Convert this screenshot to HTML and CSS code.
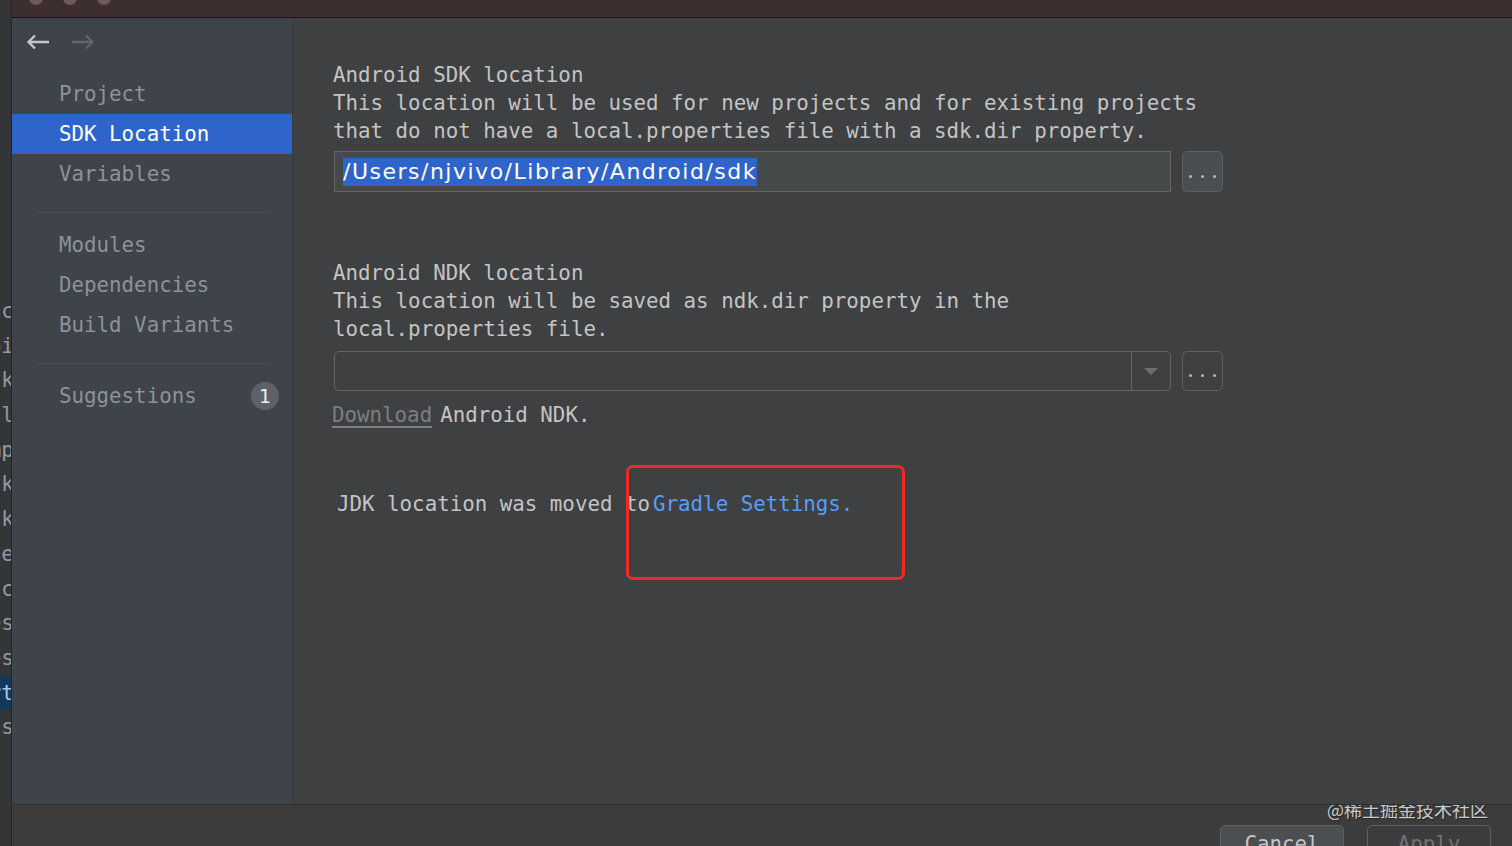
FILE: index.html
```html
<!DOCTYPE html>
<html>
<head>
<meta charset="utf-8">
<link rel="stylesheet" href="styles.css">
</head>
<body>
<div class="screen">
  <div class="editor-strip">
    <div class="code-line">func</div>
    <div class="code-line">Compi</div>
    <div class="code-line">track</div>
    <div class="code-line">ral_</div>
    <div class="code-line">comp</div>
    <div class="code-line">stack</div>
    <div class="code-line">stack</div>
    <div class="code-line">file</div>
    <div class="code-line">c</div>
    <div class="code-line">es</div>
    <div class="code-line">es</div>
    <div class="code-line current">rt</div>
    <div class="code-line">s)</div>
  </div>
  <div class="dialog">
    <div class="titlebar">
      <span class="light"></span><span class="light"></span><span class="light"></span>
    </div>
    <div class="dialog-body">
      <aside class="sidebar">
        <div class="nav">
          <svg class="arrow back" width="24" height="16" viewBox="0 0 24 16"><path d="M23 8H3M9 1.5L2.5 8L9 14.5" fill="none" stroke="currentColor" stroke-width="2.4"/></svg>
          <svg class="arrow fwd" width="24" height="16" viewBox="0 0 24 16"><path d="M1 8H21M15 1.5L21.5 8L15 14.5" fill="none" stroke="currentColor" stroke-width="2.4"/></svg>
        </div>
        <ul class="menu">
          <li class="item">Project</li>
          <li class="item selected">SDK Location</li>
          <li class="item">Variables</li>
        </ul>
        <div class="sep"></div>
        <ul class="menu">
          <li class="item">Modules</li>
          <li class="item">Dependencies</li>
          <li class="item">Build Variants</li>
        </ul>
        <div class="sep"></div>
        <ul class="menu">
          <li class="item with-badge"><span>Suggestions</span><span class="badge">1</span></li>
        </ul>
      </aside>
      <main class="content">
        <section class="block">
          <p class="text">Android SDK location</p>
          <p class="text">This location will be used for new projects and for existing projects</p>
          <p class="text">that do not have a local.properties file with a sdk.dir property.</p>
          <div class="field-row sdk-row">
            <div class="textfield"><span class="sel">/Users/njvivo/Library/Android/sdk</span></div>
            <div class="browse filled"><i></i><i></i><i></i></div>
          </div>
        </section>
        <section class="block ndk">
          <p class="text">Android NDK location</p>
          <p class="text">This location will be saved as ndk.dir property in the</p>
          <p class="text">local.properties file.</p>
          <div class="field-row ndk-row">
            <div class="combo">
              <div class="combo-input"></div>
              <div class="combo-btn"><span class="tri"></span></div>
            </div>
            <div class="browse"><i></i><i></i><i></i></div>
          </div>
          <p class="text download"><span class="dl-link">Download</span><span class="dl-rest">Android NDK.</span></p>
        </section>
        <p class="text jdk">JDK location was moved to<span class="link">Gradle Settings.</span></p>
        <div class="annot"></div>
      </main>
    </div>
    <div class="footer">
      <div class="watermark">@稀土掘金技术社区</div>
      <div class="buttons">
        <div class="btn primary">Cancel</div>
        <div class="btn dim">Apply</div>
      </div>
    </div>
  </div>
</div>
</body>
</html>
```

FILE: styles.css
```css
* { box-sizing: border-box; }
html, body { margin: 0; padding: 0; }
body {
  width: 1512px;
  height: 846px;
  overflow: hidden;
  background: #2f3133;
  font-family: "DejaVu Sans Mono", "Liberation Mono", monospace;
}
.screen {
  display: flex;
  width: 1512px;
  height: 846px;
}
.editor-strip {
  width: 12px;
  flex: none;
  background: #333537;
  border-right: 1px solid #242526;
  padding-top: 294px;
  overflow: hidden;
}
.code-line {
  height: 34.7px;
  line-height: 34.7px;
  font-size: 21px;
  color: #8f9aa6;
  text-align: right;
  white-space: nowrap;
  direction: rtl;
  overflow: hidden;
  margin-right: -3px;
}
.code-line.current {
  background: #12395a;
  color: #a9c5e0;
}
.dialog {
  flex: 1;
  display: flex;
  flex-direction: column;
  min-width: 0;
}
.titlebar {
  height: 18px;
  flex: none;
  background: #3d2e2f;
  border-bottom: 1px solid #1c1415;
  display: flex;
  gap: 20px;
  padding-left: 17px;
  align-items: flex-start;
  overflow: hidden;
}
.light {
  width: 14px;
  height: 14px;
  border-radius: 50%;
  background: #6a5a5b;
  margin-top: -9px;
}
.dialog-body {
  flex: 1;
  display: flex;
  min-height: 0;
}
.sidebar {
  width: 281px;
  flex: none;
  background: #3f434a;
  border-right: 1px solid #36393e;
}
.nav {
  height: 47px;
  display: flex;
  align-items: center;
  gap: 21px;
  padding-left: 14px;
}
.arrow.back { color: #c2c6ca; }
.arrow.fwd { color: #60666d; }
.menu {
  list-style: none;
  margin: 0;
  padding: 0;
}
.nav + .menu { margin-top: 9px; }
.item {
  height: 40px;
  line-height: 40px;
  padding-left: 47px;
  font-size: 20.8px;
  color: #8e9297;
}
.item.selected {
  background: #2f65ca;
  color: #ffffff;
}
.with-badge {
  display: flex;
  justify-content: space-between;
  align-items: center;
  padding-right: 13px;
}
.badge {
  width: 28px;
  height: 28px;
  border-radius: 50%;
  background: #5c616a;
  color: #f0f0f0;
  font-family: "DejaVu Sans", sans-serif;
  font-size: 19px;
  line-height: 28px;
  text-align: center;
}
.sep {
  height: 1px;
  background: #4c5058;
  margin: 18px 22px 12px 24px;
}
.content {
  flex: 1;
  background: #3e4042;
  padding: 43px 0 0 40px;
  position: relative;
}
.text {
  margin: 0;
  font-size: 20.8px;
  line-height: 28px;
  color: #c4c4c4;
  white-space: nowrap;
}
.field-row {
  display: flex;
  gap: 11px;
  margin-left: 1px;
}
.sdk-row { margin-top: 6px; height: 41px; }
.textfield {
  width: 837px;
  height: 41px;
  background: #45494a;
  border: 1px solid #646667;
  padding: 6px 0 0 8px;
}
.sel {
  display: inline-block;
  background: #2f65ca;
  color: #ffffff;
  font-family: "DejaVu Sans", sans-serif;
  font-size: 22px;
  letter-spacing: 1.5px;
  line-height: 28px;
  height: 28px;
  padding-right: 0;
}
.browse {
  width: 41px;
  height: 41px;
  border: 1px solid #5d6061;
  border-radius: 5px;
  display: flex;
  justify-content: center;
  align-items: flex-end;
  gap: 9px;
  padding-bottom: 13px;
}
.browse.filled { background: #4a4e50; }
.browse i {
  width: 3px;
  height: 3px;
  border-radius: 50%;
  background: #b4b4b4;
}
.ndk { margin-top: 67px; }
.ndk-row { margin-top: 8px; height: 40px; }
.ndk-row .browse { height: 40px; }
.combo {
  width: 837px;
  height: 40px;
  border: 1px solid #626465;
  border-radius: 5px;
  display: flex;
}
.combo-input { flex: 1; }
.combo-btn {
  width: 39px;
  border-left: 1px solid #626465;
  display: flex;
  align-items: center;
  justify-content: center;
}
.tri {
  width: 0;
  height: 0;
  border-left: 7px solid transparent;
  border-right: 7px solid transparent;
  border-top: 7px solid #6c6e70;
}
.download {
  margin-top: 10px;
  margin-left: -1px;
}
.dl-link {
  color: #7b7e82;
  text-decoration: underline;
  text-underline-offset: 4px;
}
.dl-rest { margin-left: 8px; }
.jdk {
  margin-top: 61px;
  padding-left: 4px;
}
.link { color: #589df6; margin-left: 3px; }
.annot {
  position: absolute;
  left: 333px;
  top: 447px;
  width: 279px;
  height: 115px;
  border: 3px solid #ee2a22;
  border-radius: 7px;
}
.footer {
  height: 42px;
  flex: none;
  background: #3c3c3d;
  border-top: 1px solid #2e2f30;
  position: relative;
  overflow: hidden;
}
.watermark {
  position: absolute;
  right: 24px;
  top: -9px;
  font-family: "Noto Sans CJK SC", sans-serif;
  font-size: 18px;
  color: #c9c9c9;
  text-shadow: 1px 1px 1px #222;
}
.buttons {
  display: flex;
  justify-content: flex-end;
  gap: 23px;
  padding: 20px 21px 0 0;
}
.btn {
  width: 124px;
  height: 40px;
  border: 1px solid #5e6162;
  border-radius: 5px;
  font-size: 20.8px;
  line-height: 36px;
  text-align: center;
  color: #c4c4c4;
}
.btn.primary { background: #4b4f51; }
.btn.dim { color: #6f7274; }
```
